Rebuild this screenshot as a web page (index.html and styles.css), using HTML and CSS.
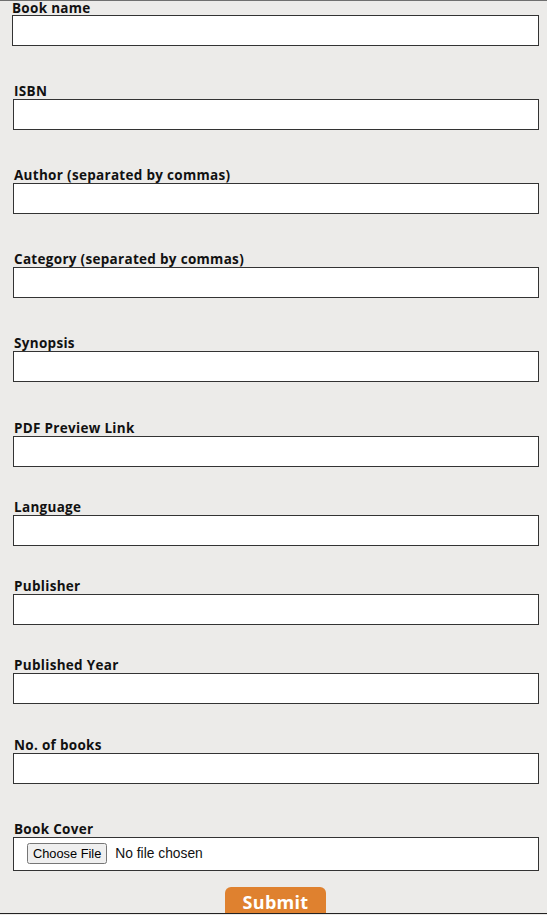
FILE: index.html
```html
<!DOCTYPE html>
<html lang="en">
<head>
<meta charset="utf-8">
<title>Add Book</title>
<link rel="stylesheet" href="styles.css">
</head>
<body>
<form class="book-form">
  <div class="field field--first">
    <label class="field__label" for="name">Book name</label>
    <input class="field__input" id="name" type="text">
  </div>
  <div class="field">
    <label class="field__label" for="isbn">ISBN</label>
    <input class="field__input" id="isbn" type="text">
  </div>
  <div class="field">
    <label class="field__label" for="author">Author (separated by commas)</label>
    <input class="field__input" id="author" type="text">
  </div>
  <div class="field">
    <label class="field__label" for="category">Category (separated by commas)</label>
    <input class="field__input" id="category" type="text">
  </div>
  <div class="field">
    <label class="field__label" for="synopsis">Synopsis</label>
    <input class="field__input" id="synopsis" type="text">
  </div>
  <div class="field field--wide">
    <label class="field__label" for="pdf">PDF Preview Link</label>
    <input class="field__input" id="pdf" type="text">
  </div>
  <div class="field field--tight">
    <label class="field__label" for="lang">Language</label>
    <input class="field__input" id="lang" type="text">
  </div>
  <div class="field field--tight">
    <label class="field__label" for="publisher">Publisher</label>
    <input class="field__input" id="publisher" type="text">
  </div>
  <div class="field field--tight">
    <label class="field__label" for="year">Published Year</label>
    <input class="field__input" id="year" type="text">
  </div>
  <div class="field field--tight-plus">
    <label class="field__label" for="count">No. of books</label>
    <input class="field__input" id="count" type="text">
  </div>
  <div class="field">
    <label class="field__label" for="cover">Book Cover</label>
    <input class="field__file" id="cover" type="file">
  </div>
  <div class="actions">
    <button class="actions__submit" type="submit">Submit</button>
  </div>
</form>
</body>
</html>
```
FILE: styles.css
```css
html, body {
  margin: 0;
  padding: 0;
  background: #ecebe9;
}
body {
  font-family: "Open Sans", "Liberation Sans", sans-serif;
  color: #111;
}
.book-form {
  border-top: 1px solid #6f6f6f;
  display: flex;
  flex-direction: column;
  padding: 0 9px 0 13px;
}
.field {
  display: flex;
  flex-direction: column;
  margin-top: 39px;
}
.field--first {
  margin-top: 0;
  margin-left: -1px;
}
.field--first .field__label {
  padding-left: 0;
  line-height: 14px;
  padding-bottom: 0;
}
.field--first .field__input {
  width: 527px;
}
.field--wide { margin-top: 40px; }
.field--tight { margin-top: 34px; }
.field--tight-plus { margin-top: 35px; }
.field__label {
  font-size: 13.5px;
  letter-spacing: 0.3px;
  line-height: 12px;
  padding-bottom: 2px;
  font-weight: 700;
  color: #111;
  padding-left: 1px;
  white-space: nowrap;
}
.field__input {
  box-sizing: border-box;
  width: 526px;
  height: 31px;
  margin: 0;
  border: 1px solid #333;
  background: #fff;
  border-radius: 0;
  padding: 0 6px;
  font-size: 14px;
}
.field__file {
  box-sizing: border-box;
  width: 526px;
  height: 34px;
  margin: 0;
  border: 1px solid #333;
  background: #fff;
  padding: 5px 13px;
  font-family: "Liberation Sans", Arial, sans-serif;
  font-size: 13.8px;
  color: #111;
}
.field__file::file-selector-button {
  font-family: "Liberation Sans", Arial, sans-serif;
  font-size: 12.8px;
  padding: 1px 4px;
  margin-right: 8px;
}
.actions {
  margin-top: 16px;
  height: 26px;
  overflow: hidden;
  display: flex;
  justify-content: center;
  border-bottom: 1px solid #222;
  margin-left: -13px;
  margin-right: -9px;
}
.actions__submit {
  width: 101px;
  height: 36px;
  flex: none;
  border: none;
  border-radius: 6px;
  background: #df812f;
  color: #fff;
  font-family: "Open Sans", sans-serif;
  font-weight: 700;
  font-size: 18px;
  letter-spacing: 0.3px;
  padding: 0 0 6px;
  margin-left: 4px;
}
```
